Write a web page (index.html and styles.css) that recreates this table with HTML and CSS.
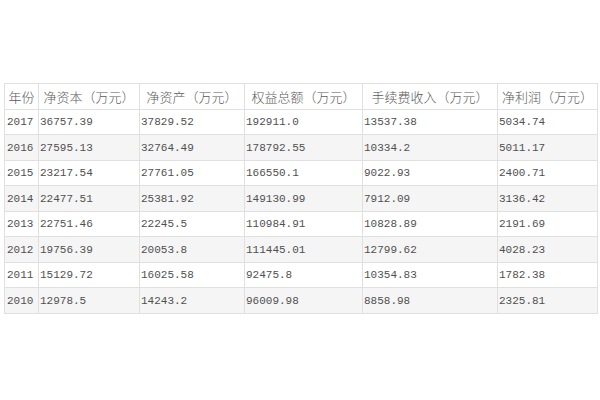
FILE: index.html
```html
<!DOCTYPE html>
<html lang="zh">
<head>
<meta charset="utf-8">
<link rel="stylesheet" href="styles.css">
</head>
<body>
<div class="page">
<table class="data">
<colgroup>
<col class="c1"><col class="c2"><col class="c3"><col class="c4"><col class="c5"><col class="c6">
</colgroup>
<thead>
<tr><th>年份</th><th>净资本（万元）</th><th>净资产（万元）</th><th>权益总额（万元）</th><th>手续费收入（万元）</th><th>净利润（万元）</th></tr>
</thead>
<tbody>
<tr><td>2017</td><td>36757.39</td><td>37829.52</td><td>192911.0</td><td>13537.38</td><td>5034.74</td></tr>
<tr><td>2016</td><td>27595.13</td><td>32764.49</td><td>178792.55</td><td>10334.2</td><td>5011.17</td></tr>
<tr><td>2015</td><td>23217.54</td><td>27761.05</td><td>166550.1</td><td>9022.93</td><td>2400.71</td></tr>
<tr><td>2014</td><td>22477.51</td><td>25381.92</td><td>149130.99</td><td>7912.09</td><td>3136.42</td></tr>
<tr><td>2013</td><td>22751.46</td><td>22245.5</td><td>110984.91</td><td>10828.89</td><td>2191.69</td></tr>
<tr><td>2012</td><td>19756.39</td><td>20053.8</td><td>111445.01</td><td>12799.62</td><td>4028.23</td></tr>
<tr><td>2011</td><td>15129.72</td><td>16025.58</td><td>92475.8</td><td>10354.83</td><td>1782.38</td></tr>
<tr><td>2010</td><td>12978.5</td><td>14243.2</td><td>96009.98</td><td>8858.98</td><td>2325.81</td></tr>
</tbody>
</table>
</div>
</body>
</html>
```

FILE: styles.css
```css
html, body {
  margin: 0;
  padding: 0;
  background: #ffffff;
}
.page {
  padding: 83px 4px 0 4px;
}
.data {
  border-collapse: collapse;
  table-layout: fixed;
  width: 593px;
}
.c1 { width: 34px; }
.c2 { width: 101px; }
.c3 { width: 105px; }
.c4 { width: 118px; }
.c5 { width: 135px; }
.c6 { width: 100px; }
.data th, .data td {
  border: 1px solid #e0e0e0;
  padding: 0;
  overflow: hidden;
  white-space: nowrap;
}
.data th {
  font-family: "Noto Sans CJK SC", sans-serif;
  font-weight: 300;
  font-size: 13px;
  color: #5a5a5a;
  text-align: center;
  height: 25px;
}
.data td {
  font-family: "Liberation Mono", monospace;
  font-size: 11px;
  color: #505050;
  text-align: left;
  padding-left: 1px;
  height: 24px;
}
.data td:first-child {
  padding-left: 2px;
}
.data tbody tr:nth-child(odd) td { height: 24px; }
.data tbody tr:nth-child(even) td { height: 25px; background: #f5f5f5; }
```
